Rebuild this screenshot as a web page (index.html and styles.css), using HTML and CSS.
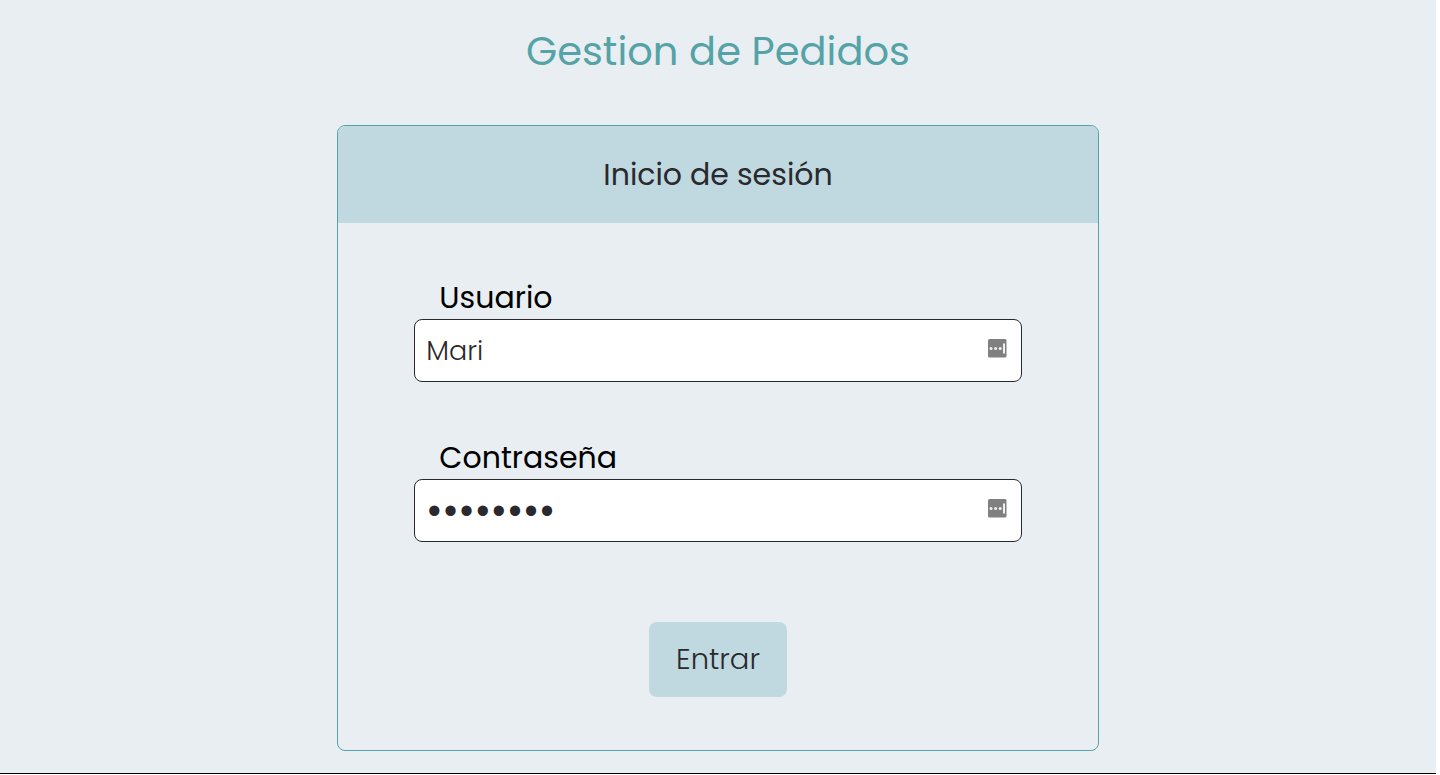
FILE: index.html
```html
<!DOCTYPE html>
<html lang="es">
<head>
  <meta charset="utf-8">
  <meta name="viewport" content="width=device-width, initial-scale=1">
  <title>Gestion de Pedidos</title>
  <link rel="stylesheet" href="styles.css">
</head>
<body>
  <main class="page">
    <h1 class="title">Gestion de Pedidos</h1>
    <form class="card">
      <h2 class="card-header">Inicio de sesión</h2>
      <div class="card-body">
        <div class="field">
          <label class="label" for="usuario">Usuario</label>
          <div class="control">
            <input class="input" id="usuario" type="text" value="Mari">
            <svg class="key-icon" viewBox="0 0 19 19" aria-hidden="true">
              <rect width="18.5" height="18.5" rx="1.5" fill="#808080"/>
              <g fill="#efefef"><circle cx="3" cy="9.5" r="1.5"/><circle cx="7.6" cy="9.5" r="1.5"/><circle cx="12.2" cy="9.5" r="1.5"/><rect x="15" y="4.5" width="2" height="10"/></g>
            </svg>
          </div>
        </div>
        <div class="field">
          <label class="label" for="clave">Contraseña</label>
          <div class="control">
            <input class="input input-password" id="clave" type="password" value="pedidos1">
            <svg class="key-icon" viewBox="0 0 19 19" aria-hidden="true">
              <rect width="18.5" height="18.5" rx="1.5" fill="#808080"/>
              <g fill="#efefef"><circle cx="3" cy="9.5" r="1.5"/><circle cx="7.6" cy="9.5" r="1.5"/><circle cx="12.2" cy="9.5" r="1.5"/><rect x="15" y="4.5" width="2" height="10"/></g>
            </svg>
          </div>
        </div>
        <button class="submit" type="button">Entrar</button>
      </div>
    </form>
  </main>
</body>
</html>
```
FILE: styles.css
```css
* {
  box-sizing: border-box;
}

html {
  background: #fff;
}

body {
  margin: 0;
  font-family: Poppins, Inter, "Open Sans", sans-serif;
  font-weight: 300;
  color: #29292e;
}

.page {
  display: flex;
  flex-direction: column;
  align-items: center;
  padding: 20px 0 22px;
  margin-right: 4px;
  background: #e8eef2;
  border-bottom: 1px solid #000;
}

.title {
  margin: 0 0 43px;
  font-size: 40px;
  line-height: 62px;
  font-weight: 400;
  color: #55a3a7;
}

.card {
  width: 53%;
  border: 1px solid #55a3a7;
  border-radius: 8px;
  overflow: hidden;
}

.card-header {
  margin: 0;
  padding: 26px 0;
  background: #c0d8df;
  font-size: 30px;
  line-height: 45px;
  font-weight: 400;
  text-align: center;
}

.card-body {
  display: flex;
  flex-direction: column;
  align-items: center;
  padding: 54px 0 53px;
}

.field {
  width: 80%;
  margin-bottom: 55px;
}

.label {
  display: block;
  padding-left: 25px;
  font-size: 30px;
  line-height: 42px;
  font-weight: 400;
  color: #000;
}

.control {
  position: relative;
}

.input {
  display: block;
  width: 100%;
  height: 63px;
  padding: 0 48px 0 11px;
  border: 1px solid #29292e;
  border-radius: 8px;
  background: #fff;
  color: inherit;
  font: inherit;
  font-size: 27px;
}

.input-password {
  font-size: 44px;
}

.key-icon {
  position: absolute;
  top: 20px;
  right: 15px;
  width: 19px;
  height: 19px;
}

.submit {
  margin-top: 25px;
  padding: 15px 27px;
  border: 0;
  border-radius: 8px;
  background: #c0d8df;
  color: inherit;
  font: inherit;
  font-size: 29px;
  line-height: 45px;
}
```
